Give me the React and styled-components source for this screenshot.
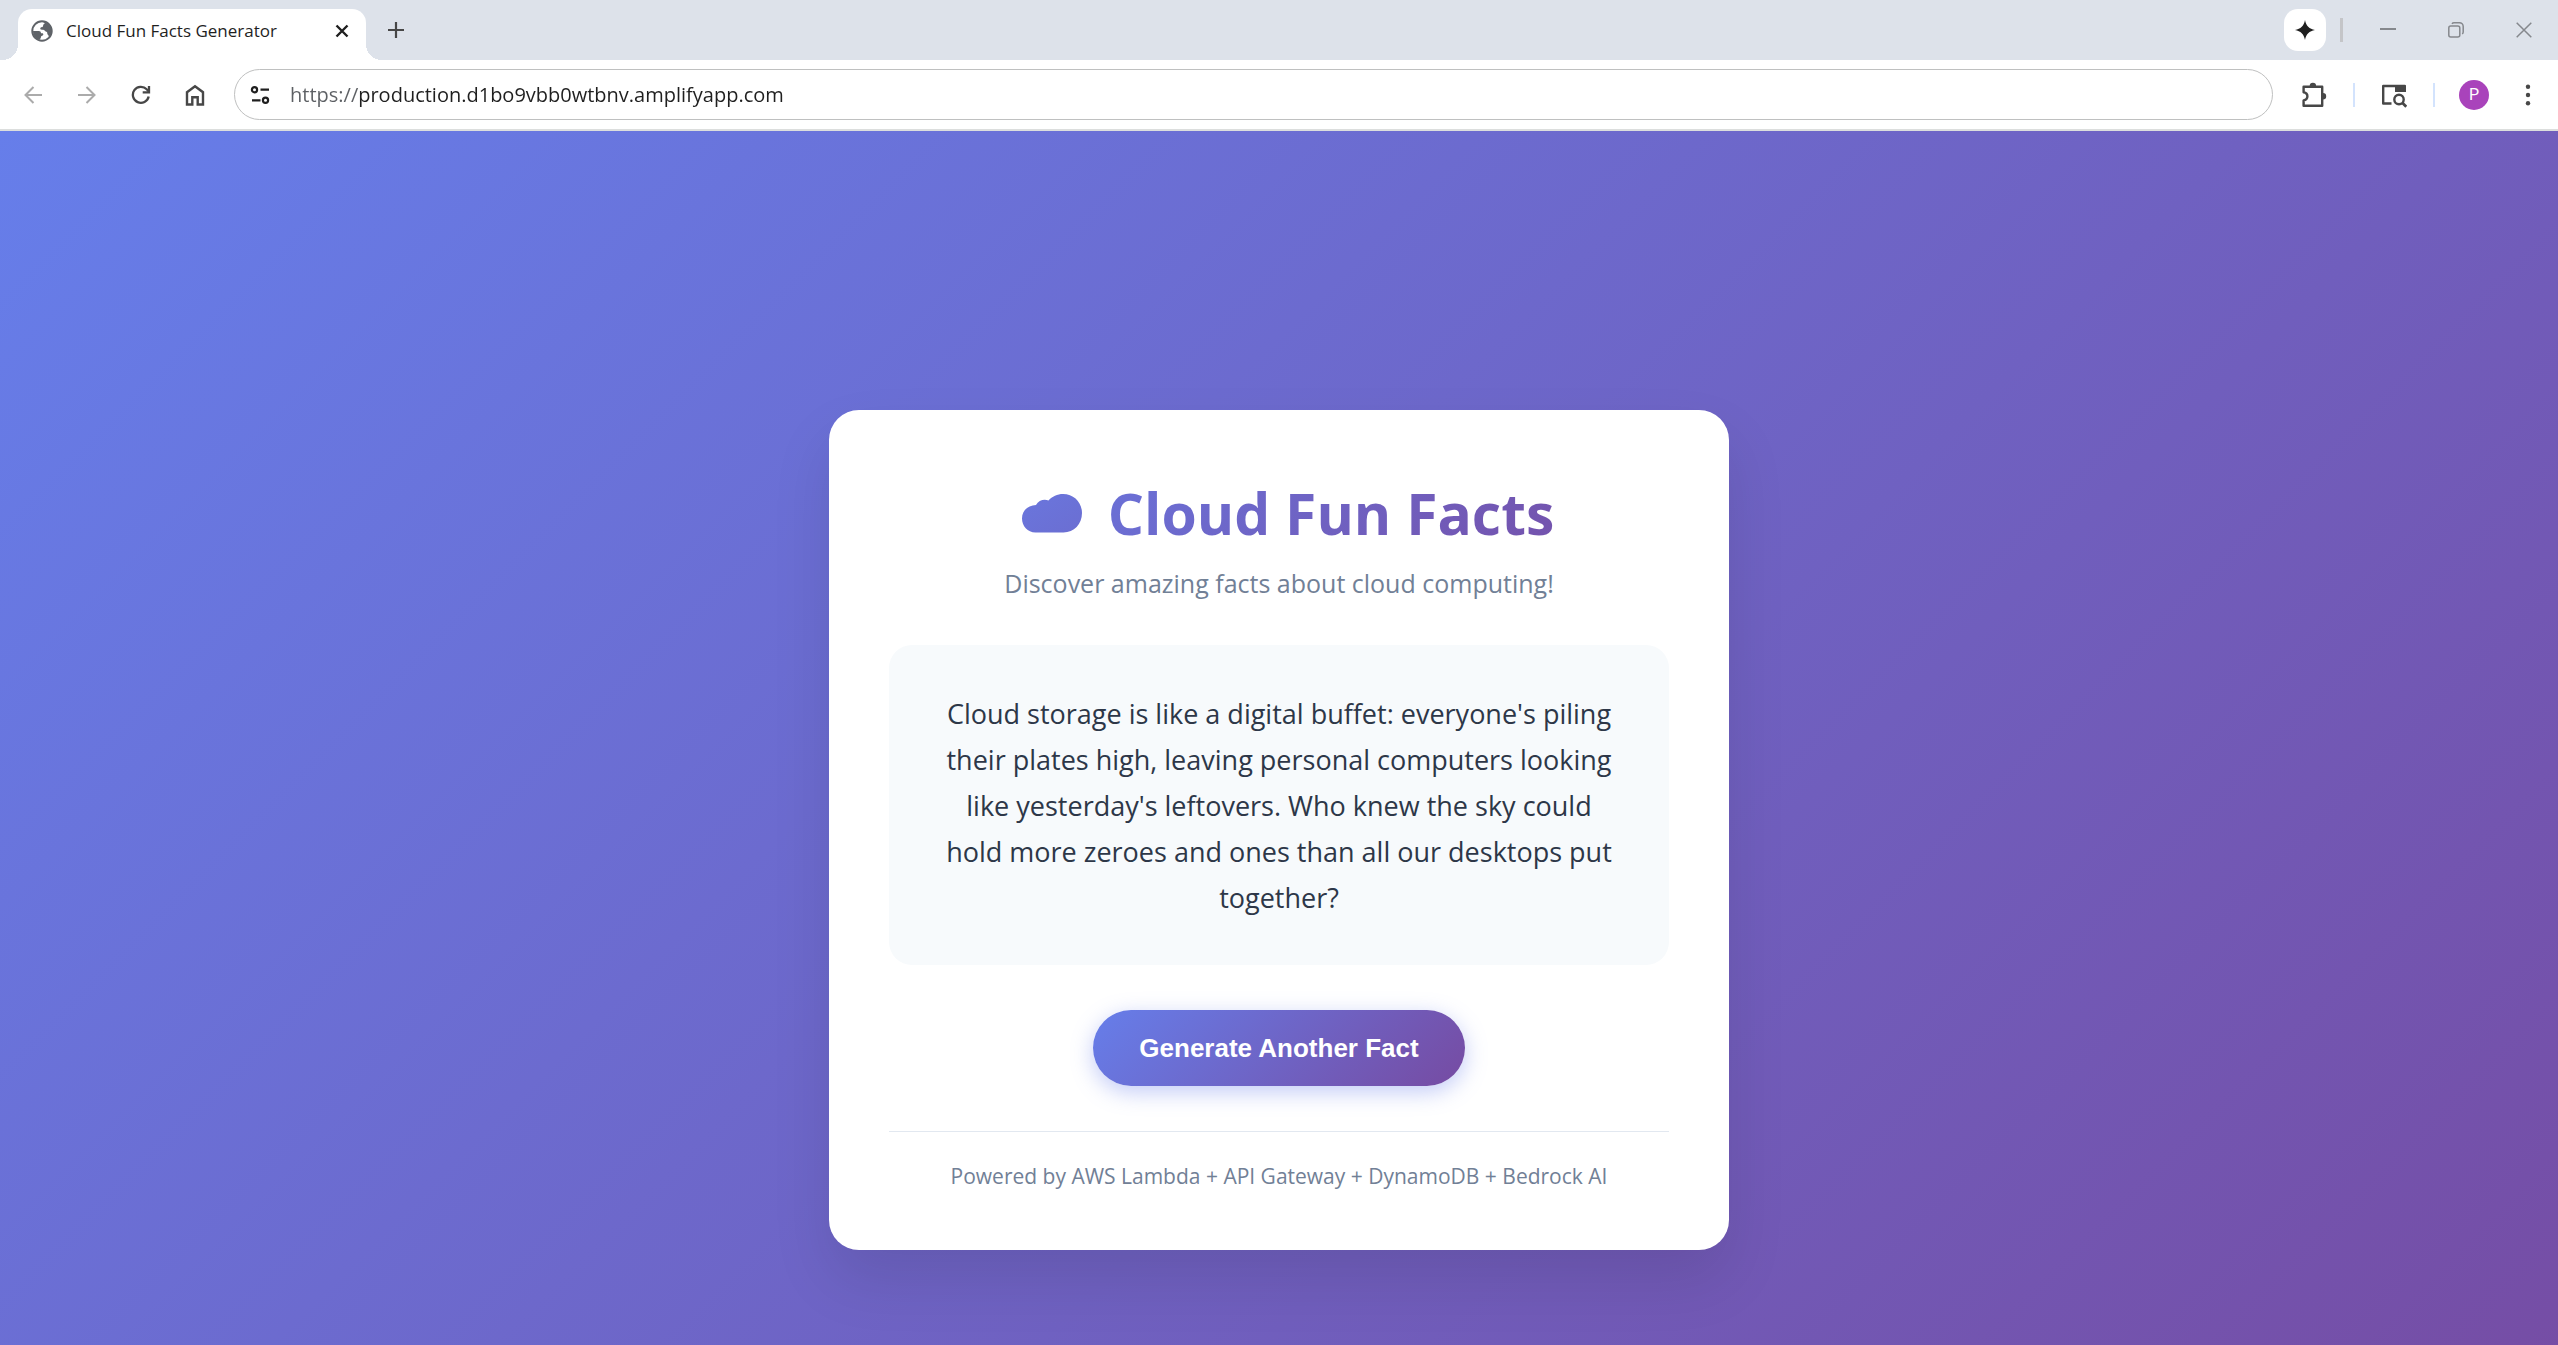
import React, { useState } from "react";
import styled, { createGlobalStyle } from "styled-components";

const GlobalStyle = createGlobalStyle`
  *, *::before, *::after { box-sizing: border-box; }
  body { margin: 0; font-family: "Open Sans", "Noto Sans", sans-serif; }
  h1, p { margin: 0; }
  button { font: inherit; border: 0; padding: 0; background: none; color: inherit; cursor: pointer; }
`;

const Window = styled.div`
  height: 100vh;
  overflow: hidden;
  display: flex;
  flex-direction: column;
`;

const TabStrip = styled.div`
  flex: none;
  height: 60px;
  padding-left: 18px;
  display: flex;
  align-items: center;
  background: #dde2ea;
`;

const Tab = styled.div`
  position: relative;
  align-self: flex-end;
  width: 348px;
  height: 51px;
  padding: 0 12px 8px;
  display: flex;
  align-items: center;
  background: #fff;
  border-radius: 14px 14px 0 0;
  color: #1f1f1f;

  &::before,
  &::after {
    content: "";
    position: absolute;
    bottom: 0;
    width: 16px;
    height: 16px;
  }
  &::before {
    right: 100%;
    background: radial-gradient(circle at 0 0, transparent 16px, #fff 16px);
  }
  &::after {
    left: 100%;
    background: radial-gradient(circle at 100% 0, transparent 16px, #fff 16px);
  }
`;

const TabTitle = styled.span`
  flex: 1;
  padding-left: 12px;
  font-size: 17px;
  line-height: 24px;
  white-space: nowrap;
`;

const IconButton = styled.button`
  flex: none;
  width: ${(p) => p.$width || 54}px;
  height: 36px;
  display: flex;
  align-items: center;
  justify-content: center;
  color: ${(p) => p.$color || "#474747"};
`;

const NewTab = styled(IconButton)`
  margin-left: 12px;
`;

const Spacer = styled.div`
  flex: 1;
`;

const AssistantButton = styled.button`
  width: 42px;
  height: 42px;
  display: flex;
  align-items: center;
  justify-content: center;
  background: #fff;
  border-radius: 14px;
  color: #1f1f1f;
`;

const StripDivider = styled.span`
  width: 3px;
  height: 24px;
  margin: 0 11px 0 14px;
  background: #c4c5c8;
`;

const Toolbar = styled.div`
  flex: none;
  height: 71px;
  padding: 0 3px 0 6px;
  display: flex;
  align-items: center;
  background: #fff;
  border-bottom: 2px solid #dcdedd;
`;

const AddressBar = styled.label`
  flex: 1;
  height: 51px;
  margin: 0 14px 0 12px;
  padding: 0 15px;
  display: flex;
  align-items: center;
  gap: 20px;
  border: 1px solid #bfc0c0;
  border-radius: 26px;
  color: #1f1f1f;
`;

const Address = styled.input`
  flex: 1;
  min-width: 0;
  border: 0;
  padding: 0;
  outline: 0;
  font-family: inherit;
  font-size: 20px;
  line-height: 30px;
  color: transparent;
  caret-color: #1f1f1f;
  background: linear-gradient(to right, #5c5f63 68px, #1f1f1f 68px);
  background-clip: text;
`;

const ToolDivider = styled.span`
  width: 2px;
  height: 24px;
  margin: 0 12px;
  background: #d3e3fd;
`;

const Avatar = styled.span`
  width: 30px;
  height: 30px;
  border-radius: 50%;
  background: #a943bb;
  color: #fff;
  font-family: Roboto, sans-serif;
  font-size: 16px;
  line-height: 30px;
  text-align: center;
`;

const Page = styled.main`
  flex: none;
  min-height: 104vh;
  padding: 30px;
  display: flex;
  align-items: center;
  justify-content: center;
  background: linear-gradient(135deg, #667eea 0%, #764ba2 100%);
`;

const Card = styled.section`
  width: 100%;
  max-width: 900px;
  padding: 60px;
  background: #fff;
  border-radius: 30px;
  box-shadow: 0 30px 60px rgba(0, 0, 0, 0.1);
  text-align: center;
`;

const Title = styled.h1`
  display: flex;
  align-items: center;
  justify-content: center;
  gap: 26px;
  margin-bottom: 5px;
  padding-left: 18px;
  font-size: 57px;
  line-height: 86px;
  font-weight: 700;
  color: transparent;
  background: linear-gradient(135deg, #667eea, #764ba2);
  background-clip: text;
`;

const Subtitle = styled.p`
  margin-bottom: 40px;
  font-size: 25px;
  line-height: 44px;
  color: #718096;
`;

const Fact = styled.p`
  margin-bottom: 45px;
  padding: 46px 50px 44px;
  border-radius: 23px;
  background: #f7fafc;
  font-size: 27px;
  line-height: 46px;
  color: #2d3748;
`;

const GenerateButton = styled.button`
  height: 76px;
  padding: 0 46px;
  border-radius: 38px;
  background: linear-gradient(135deg, #667eea 0%, #764ba2 100%);
  box-shadow: 0 6px 22px rgba(102, 126, 234, 0.4);
  color: #fff;
  font-family: "Liberation Sans", Arial, sans-serif;
  font-size: 26px;
  font-weight: 700;
`;

const Footer = styled.footer`
  margin-top: 45px;
  padding-top: 31px;
  border-top: 1px solid #e2e8f0;
  font-size: 21px;
  line-height: 27px;
  color: #718096;
`;

const Svg = ({ size = 24, children, ...rest }) => (
  <svg
    width={size}
    height={size}
    viewBox={`0 0 ${size} ${size}`}
    fill="none"
    stroke="currentColor"
    strokeWidth="2"
    aria-hidden="true"
    {...rest}
  >
    {children}
  </svg>
);

const GlobeIcon = () => (
  <Svg size={24} color="#5f6368">
    <circle cx="12" cy="12" r="9.7" strokeWidth="2" />
    <path
      fill="currentColor"
      stroke="none"
      d="M12 2C17.5 2 22 6.5 22 12c0 2.3-.9 4.600-2.300 6.300L17.300 15c.3-1.200-.4-2.200-1.700-2.400-.8-1.500-2-2-3.600-1.900-1.600 0-2-.8-1.600-1.700.4-.9 1.400-.8 2.100-1.100.8-.5.4-1.700 1-2.500.4-.5 1.100-.6 1.300-1.300L12 2ZM3 12h5.800c1.500 0 2.100.9 2.200 2.300h1.800c.9.700.6 2.200-.6 2.500-1.200.3-1.300 1.200-1.400 2.200l-1.500 2C5.500 20 3 16 3 12Z"
    />
  </Svg>
);

const CloseIcon = () => (
  <Svg size={14} strokeWidth="2.400">
    <path d="M1.500 1.500l11 11M12.500 1.500l-11 11" />
  </Svg>
);

const PlusIcon = () => (
  <Svg size={16} strokeWidth="2.200">
    <path d="M8 0v16M0 8h16" />
  </Svg>
);

const SparkIcon = () => (
  <Svg size={20}>
    <path
      fill="currentColor"
      stroke="none"
      d="M10 0c.9 5.600 4.400 9.100 10 10-5.600.9-9.100 4.400-10 10-.9-5.600-4.400-9.100-10-10C5.600 9.100 9.100 5.600 10 0Z"
    />
  </Svg>
);

const MinimizeIcon = () => (
  <Svg size={16}>
    <path d="M0 7h16" />
  </Svg>
);

const RestoreIcon = () => (
  <Svg size={16} strokeWidth="1.500">
    <rect x="0.800" y="4" width="11" height="11" rx="2" />
    <path d="M4 1.800C4.500 1 5 .8 6 .8h5.500a3.700 3.700 0 0 1 3.700 3.700V10c0 1-.3 1.500-1 2" />
  </Svg>
);

const WindowCloseIcon = () => (
  <Svg size={16} strokeWidth="1.500">
    <path d="M.7.7l14.600 14.600M15.300.7L.7 15.300" />
  </Svg>
);

const BackIcon = () => (
  <Svg size={18}>
    <path d="M18 9H2M9.500 1L1.500 9l8 8" />
  </Svg>
);

const ForwardIcon = () => (
  <Svg size={18}>
    <path d="M0 9h16M8.500 1l8 8-8 8" />
  </Svg>
);

const ReloadIcon = () => (
  <Svg size={20} strokeWidth="2.300">
    <path d="M17.700 11.500A8 8 0 1 1 15.700 4.300L18 6.600" />
    <path d="M18 1v6.300h-6.300" />
  </Svg>
);

const HomeIcon = () => (
  <Svg size={22} strokeWidth="2.400">
    <path d="M3 8.200L11 2.200l8 6v12.300h-5.300v-7.200H8.300v7.200H3Z" />
  </Svg>
);

const TuneIcon = () => (
  <Svg size={20} strokeWidth="2.200">
    <circle cx="4.500" cy="4.700" r="2.600" />
    <path d="M10.500 4.700H19M2 15.300h8.500" />
    <circle cx="15.500" cy="15.300" r="2.600" />
  </Svg>
);

const PuzzleIcon = () => (
  <Svg size={26} strokeWidth="2.400">
    <path
      strokeLinejoin="round"
      d="M2.600 4.800h18.600v19H2.600v-5.400c2.400-.4 3.800-2 3.800-4.100s-1.400-3.700-3.800-4.100Z"
    />
    <path fill="currentColor" stroke="none" d="M8.700 4a3.200 3.200 0 0 1 6.400 0ZM22 11a3.200 3.200 0 0 1 0 6.400Z" />
  </Svg>
);

const SearchPanelIcon = () => (
  <Svg size={26} strokeWidth="2.400">
    <path strokeLinejoin="round" d="M10.500 21.500H2.200V4h21.600v5" />
    <path fill="currentColor" stroke="none" d="M14 3h9a2 2 0 0 1 2 2v5H14Z" />
    <circle cx="18" cy="17.500" r="4.700" />
    <path d="M21.300 20.800l4 4" strokeWidth="2.800" />
  </Svg>
);

const MoreIcon = () => (
  <Svg size={24} fill="currentColor" stroke="none">
    <circle cx="12" cy="3.800" r="2.200" />
    <circle cx="12" cy="12" r="2.200" />
    <circle cx="12" cy="20.200" r="2.200" />
  </Svg>
);

const CloudIcon = () => (
  <svg width="60" height="40" viewBox="0 0 60 40" aria-hidden="true">
    <defs>
      <linearGradient id="cloud-fill" x1="0" y1="0" x2="1" y2="1">
        <stop offset="0" stopColor="#6a76dd" />
        <stop offset="1" stopColor="#6b6ed2" />
      </linearGradient>
    </defs>
    <path
      fill="url(#cloud-fill)"
      d="M13.500 39.500C5.500 39.500 0 33 0 25.500 0 17.500 6 12.200 14 11.900 16.500 7.500 22 5.500 26.500 7.500 30 3.500 35.500 1 41 1c11 0 19 8.500 19 19C60 31 52 39.500 41.500 39.500Z"
    />
  </svg>
);

export default function App() {
  const [url, setUrl] = useState("https://production.d1bo9vbb0wtbnv.amplifyapp.com");

  return (
    <Window>
      <GlobalStyle />
      <TabStrip>
        <Tab>
          <GlobeIcon />
          <TabTitle>Cloud Fun Facts Generator</TabTitle>
          <IconButton $width={24} $color="#1f1f1f" aria-label="Close tab"><CloseIcon /></IconButton>
        </Tab>
        <NewTab $width={36} aria-label="New tab"><PlusIcon /></NewTab>
        <Spacer />
        <AssistantButton aria-label="Assistant"><SparkIcon /></AssistantButton>
        <StripDivider />
        <IconButton $width={68} $color="#85888d" aria-label="Minimize"><MinimizeIcon /></IconButton>
        <IconButton $width={68} $color="#85888d" aria-label="Restore"><RestoreIcon /></IconButton>
        <IconButton $width={68} $color="#85888d" aria-label="Close"><WindowCloseIcon /></IconButton>
      </TabStrip>
      <Toolbar>
        <IconButton $color="#ababab" aria-label="Back"><BackIcon /></IconButton>
        <IconButton $color="#ababab" aria-label="Forward"><ForwardIcon /></IconButton>
        <IconButton aria-label="Reload"><ReloadIcon /></IconButton>
        <IconButton aria-label="Home"><HomeIcon /></IconButton>
        <AddressBar>
          <TuneIcon />
          <Address
            type="text"
            aria-label="Address"
            spellCheck={false}
            value={url}
            onChange={(e) => setUrl(e.target.value)}
          />
        </AddressBar>
        <IconButton aria-label="Extensions"><PuzzleIcon /></IconButton>
        <ToolDivider />
        <IconButton aria-label="Search panel"><SearchPanelIcon /></IconButton>
        <ToolDivider />
        <IconButton aria-label="Profile"><Avatar>P</Avatar></IconButton>
        <IconButton aria-label="Menu"><MoreIcon /></IconButton>
      </Toolbar>
      <Page>
        <Card>
          <Title>
            <CloudIcon />
            Cloud Fun Facts
          </Title>
          <Subtitle>Discover amazing facts about cloud computing!</Subtitle>
          <Fact>
            Cloud storage is like a digital buffet: everyone's piling their plates high, leaving
            personal computers looking like yesterday's leftovers. Who knew the sky could hold more
            zeroes and ones than all our desktops put together?
          </Fact>
          <GenerateButton type="button">Generate Another Fact</GenerateButton>
          <Footer>Powered by AWS Lambda + API Gateway + DynamoDB + Bedrock AI</Footer>
        </Card>
      </Page>
    </Window>
  );
}
